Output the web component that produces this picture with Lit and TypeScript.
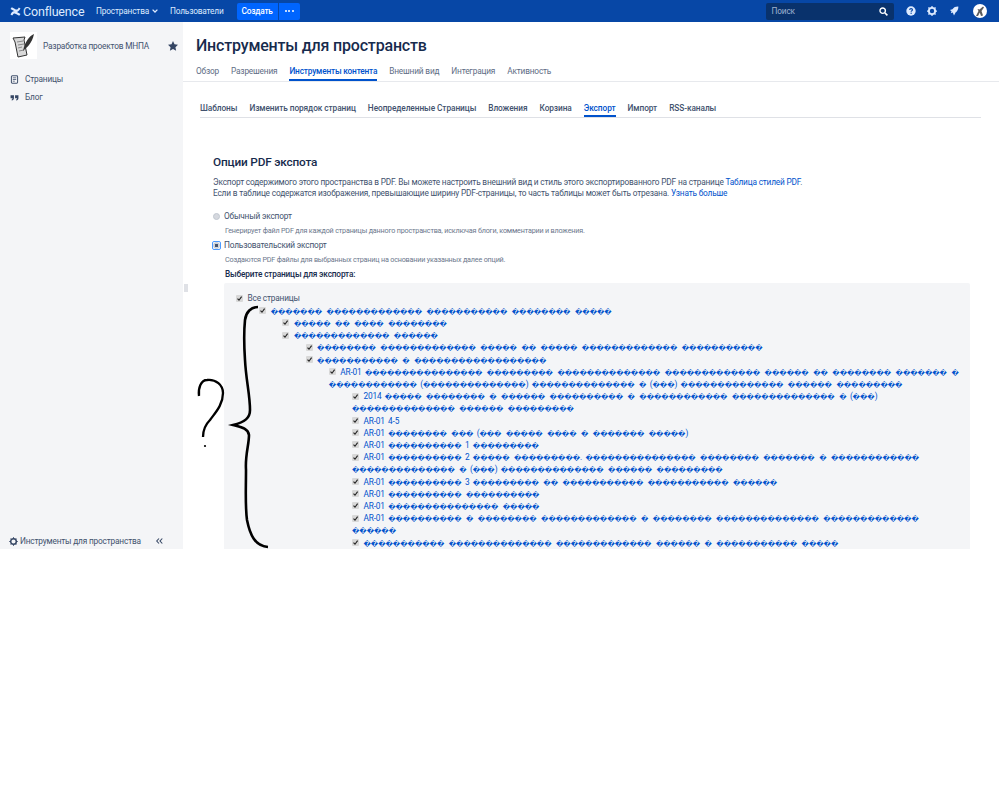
import { LitElement, html, css, svg } from "lit";
import { customElement } from "lit/decorators.js";

const C = "\uFFFD";
// Digits stand for runs of replacement characters; "#n" stays a literal digit.
const w = (s: string) => s.replace(/#(\d)|(\d+)/g, (_m, lit, n) => (lit ? "\u0001" + lit : C.repeat(+n))).replace(/\u0001/g, "");

interface Row { lvl: number; pre?: string; t: string; }
const rows: Row[] = [
  { lvl: 1, t: w("7 13 11 8 5") },
  { lvl: 2, t: w("5 2 4 8") },
  { lvl: 2, t: w("13 6") },
  { lvl: 3, t: w("8 13 5 2 5 13 11") },
  { lvl: 3, t: w("11 1 18") },
  { lvl: 4, pre: "AR-01 ", t: w("16 9 14 13 6 2 8 7 1 12 (14) 14 1 (3) 14 6 9") },
  { lvl: 5, pre: "2014 ", t: w("5 8 1 6 10 1 12 14 1 (3) 14 6 9") },
  { lvl: 5, pre: "AR-01 4-5", t: "" },
  { lvl: 5, pre: "AR-01 ", t: w("8 3 (3 5 4 1 7 5)") },
  { lvl: 5, pre: "AR-01 ", t: w("10 #1 9") },
  { lvl: 5, pre: "AR-01 ", t: w("10 #2 5 9. 15 8 7 1 12 14 1 (3) 14 6 9") },
  { lvl: 5, pre: "AR-01 ", t: w("10 #3 9 2 11 11 6") },
  { lvl: 5, pre: "AR-01 ", t: w("10 10") },
  { lvl: 5, pre: "AR-01 ", t: w("15 5") },
  { lvl: 5, pre: "AR-01 ", t: w("10 1 8 13 1 8 14 13 6") },
  { lvl: 5, t: w("11 14 13 6 1 11 5") },
];

const icon = (body: unknown, size = 10, vb = 16) => html`<svg width=${size} height=${size} viewBox="0 0 ${vb} ${vb}">${body}</svg>`;
const check = html`<span class="cb"><svg width="7" height="7" viewBox="0 0 7 7"><path d="M1.5 3.6 3 5.2 5.6 1.6" fill="none" stroke="#222" stroke-width="1.1"/></svg></span>`;

@customElement("app-root")
export class AppRoot extends LitElement {
  static styles = css`
    :host { display: block; width: 999px; height: 802px; background: #fff; font-family: Roboto, "Noto Sans", sans-serif; color: #172b4d; font-size: 8.3px; letter-spacing: -0.18px; position: relative; overflow: hidden; }
    svg { display: block; flex: none; }
    a { color: inherit; text-decoration: none; }
    .page { height: 549px; display: flex; flex-direction: column; overflow: hidden; }
    header { height: 22px; flex: none; background: #0747a6; color: #deebff; display: flex; align-items: center; padding-left: 10px; box-sizing: border-box; }
    .brand { display: flex; align-items: center; gap: 2px; color: #deebff; font-size: 12.5px; width: 86px; }
    .nav { display: flex; align-items: center; gap: 3px; }
    .nav + .nav { margin-left: 12px; }
    .btns { display: flex; gap: 1px; margin-left: 13px; height: 17px; }
    .btn { background: #0065ff; color: #fff; display: flex; align-items: center; justify-content: center; font-weight: 500; border-radius: 2px 0 0 2px; width: 41px; }
    .btn.more { width: 21px; border-radius: 0 2px 2px 0; gap: 1.5px; }
    .dot { width: 2px; height: 2px; border-radius: 50%; background: #fff; }
    .search { margin-left: auto; width: 128px; height: 17px; background: #09326c; border-radius: 2px; display: flex; align-items: center; justify-content: space-between; box-sizing: border-box; padding: 0 6px; color: #9fb3d1; }
    .tools { display: flex; align-items: center; gap: 11.5px; margin: 0 12px; }
    .avatar { width: 14px; height: 14px; border-radius: 50%; background: #fff; display: flex; align-items: center; justify-content: center; margin-left: 3px; }
    .body { flex: 1; display: flex; min-height: 0; }
    aside { width: 183px; flex: none; background: #f4f5f7; display: flex; flex-direction: column; color: #42526e; box-sizing: border-box; }
    .space { display: flex; align-items: center; padding: 8px 5px 0 10px; height: 31px; }
    .space-logo { width: 27px; height: 27px; background: #fff; flex: none; display: flex; align-items: center; justify-content: center; }
    .space-name { margin-left: 6px; flex: 1; }
    .side-links { margin-top: 12px; display: flex; flex-direction: column; gap: 6px; padding-left: 10px; }
    .side-link { display: flex; align-items: center; gap: 6px; height: 12px; }
    .side-foot { margin-top: auto; display: flex; align-items: center; padding: 0 20px 0 9px; height: 16px; }
    .side-foot span { margin-left: 2px; flex: 1; }
    main { flex: 1; min-width: 0; position: relative; }
    .splitter { position: absolute; left: 1px; top: 262px; width: 4px; height: 8px; background: #dfe1e6; }
    .head { padding: 14px 0 0 13px; border-bottom: 1px solid #e7e9ed; height: 60px; box-sizing: border-box; }
    h1 { margin: 0; font-size: 16px; line-height: 20px; font-weight: 500; color: #172b4d; }
    .tabs { display: flex; gap: 12px; margin-top: 10px; color: #5e6c84; }
    .tab { height: 15px; line-height: 11px; box-sizing: border-box; }
    .tab.on { color: #0052cc; font-weight: 500; border-bottom: 2px solid #0052cc; }
    .content { padding: 21px 18px 0 17px; }
    .sub { display: flex; gap: 12px; color: #42526e; border-bottom: 1px solid #dfe1e6; height: 14px; font-weight: 500; letter-spacing: -0.075px; }
    .sub div { height: 14px; box-sizing: border-box; line-height: 11px; }
    .sub .on { color: #0052cc; border-bottom: 2px solid #0052cc; }
    .form { padding: 36px 0 0 13px; margin-right: -7px; }
    h2 { margin: 0; font-size: 11.8px; line-height: 16px; font-weight: 500; }
    p { margin: 6.5px 0 0; line-height: 11px; color: #42526e; }
    p a { color: #0052cc; }
    .radio { display: flex; align-items: center; gap: 4px; height: 14px; color: #42526e; }
    .radio i { width: 7px; height: 7px; box-sizing: border-box; border-radius: 50%; background: #d5d8de; border: 0.5px solid #c1c7d0; flex: none; position: relative; }
    .radio.on i { background: radial-gradient(circle, #42526e 0 1.4px, #d5d8de 1.9px); }
    .radio.on i::after { content: ""; position: absolute; inset: -2px; border: 1px solid #4c9aff; border-radius: 2px; }
    .radios { margin-top: 10.5px; }
    .desc { margin: 1px 0 0 12px; height: 14px; line-height: 14px; font-size: 7.2px; color: #6b778c; }
    .pick { margin: 0 0 0 12px; font-weight: 500; line-height: 14px; height: 16px; }
    .tree { background: #f4f5f7; margin: 0 0 0 11px; width: 746px; height: 300px; box-sizing: border-box; padding: 9px 8px 0 12px; border-radius: 2px; line-height: 12.2px; color: #42526e; }
    .all { margin-bottom: 0.5px; }
    .cb { display: inline-block; width: 7px; height: 7px; background: #d8d8d8; border-radius: 1px; margin-right: 4.5px; vertical-align: -0.5px; position: relative; }
    .cb svg { position: absolute; left: 0; top: 0; }
    .link { color: #0052cc; word-spacing: 1.5px; }
    .q { font-family: "DejaVu Sans", sans-serif; font-size: 6.6px; font-weight: 700; line-height: 1; letter-spacing: 0; word-spacing: 2.2px; }
    .ink { position: absolute; left: 0; top: 0; pointer-events: none; }
  `;

  /** Replacement characters take the fallback face; digits and brackets stay in the text face. */
  renderTitle(t: string) {
    return t.split(new RegExp(`(${C}+(?: +${C}+)*)`)).map((part) => (part.includes(C) ? html`<span class="q">${part}</span>` : part));
  }

  renderRow(r: Row) {
    return html`<div style="margin-left:${r.lvl * 23.2}px">${check}<span class="link">${r.pre ?? ""}${this.renderTitle(r.t)}</span></div>`;
  }

  render() {
    return html`<div class="page">
      <header>
        <div class="brand">
          <svg width="11" height="9" viewBox="0 0 11 9"><path d="M0.5 7.5C2.5 4 4 3.5 6 4.6L10.5 7 9.2 8.8 6 7C4.4 6 3.5 6.3 2.2 8.6ZM10.5 1.5C8.5 5 7 5.5 5 4.4L0.5 2 1.8 0.2 5 2C6.6 3 7.5 2.7 8.8 0.4Z" fill="#deebff"/></svg>
          <span>Confluence</span>
        </div>
        <div class="nav">Пространства <svg width="6" height="4" viewBox="0 0 6 4"><path d="M.6.6 3 3 5.4.6" fill="none" stroke="#deebff" stroke-width="1.3"/></svg></div>
        <div class="nav">Пользователи</div>
        <div class="btns">
          <div class="btn">Создать</div>
          <div class="btn more"><b class="dot"></b><b class="dot"></b><b class="dot"></b></div>
        </div>
        <div class="search"><span>Поиск</span>
          <svg width="9" height="9" viewBox="0 0 9 9"><circle cx="3.7" cy="3.7" r="2.7" fill="none" stroke="#fff" stroke-width="1.4"/><path d="M5.8 5.8 8.4 8.4" stroke="#fff" stroke-width="1.6"/></svg>
        </div>
        <div class="tools">
          ${icon(svg`<circle cx="8" cy="8" r="7.5" fill="#deebff"/><path d="M5.7 6.2C5.9 4.8 6.9 4.2 8.1 4.2 9.5 4.2 10.4 5 10.4 6.1 10.4 7.6 8.2 7.7 8.2 9.3" fill="none" stroke="#0747a6" stroke-width="1.8"/><circle cx="8.2" cy="11.5" r="1.1" fill="#0747a6"/>`)}
          ${icon(svg`<circle cx="8" cy="8" r="5" fill="none" stroke="#deebff" stroke-width="3"/><path d="M8 0V3M8 13V16M0 8H3M13 8H16M2.3 2.3 4.4 4.4M11.6 11.6 13.7 13.7M13.7 2.3 11.6 4.4M4.4 11.6 2.3 13.7" stroke="#deebff" stroke-width="2"/>`)}
          ${icon(svg`<path d="M15 1 C11 .8 8 2 5.5 5 L1.5 6.5 4 8.5 3 11.5 6 10.5 8 15 10.5 10.5 C13.5 8 15 5 15 1Z" fill="#deebff"/>`)}
          <div class="avatar">
            <svg width="10" height="11" viewBox="0 0 10 11"><path d="M1 10 3.5 5 2.5 3 4.5 3.5 8 0.5 9 1.5 6.5 5 8 9.5 6 10 4.8 6.5 3 10Z" fill="#5b5b5b"/></svg>
          </div>
        </div>
      </header>
      <div class="body">
        <aside>
          <div class="space">
            <div class="space-logo">
              <svg width="27" height="27" viewBox="0 0 27 27"><path d="M3 6 15 5 14 8 17 23 8 25 5 10Z" fill="#d9d9d9" stroke="#333" stroke-width="1"/><path d="M7 10 13 9M8 13 14 12M8 16 12 15M9 19 14 18" stroke="#666" stroke-width="0.7"/><path d="M24 2C19 4 15 10 13 19 16 16 22 12 24 2Z" fill="#333"/></svg>
            </div>
            <div class="space-name">Разработка проектов МНПА</div>
            ${icon(svg`<path d="M8 0 10.4 5.2 16 5.9 11.9 9.8 13 15.5 8 12.7 3 15.5 4.1 9.8 0 5.9 5.6 5.2Z" fill="#344563"/>`, 10)}
          </div>
          <div class="side-links">
            <div class="side-link">
              ${icon(svg`<rect x="2.5" y="1.5" width="11" height="13" rx="1.5" fill="none" stroke="#42526e" stroke-width="1.8"/><path d="M5 5H11M5 8H11M5 11H8.5" stroke="#42526e" stroke-width="1.4"/>`, 9)}
              <span>Страницы</span>
            </div>
            <div class="side-link">
              ${icon(svg`<path d="M1 4H7V9C7 11.5 5.5 13 3 13.5V11.5C4 11 4.5 10.5 4.5 9.5H1ZM9 4H15V9C15 11.5 13.5 13 11 13.5V11.5C12 11 12.5 10.5 12.5 9.5H9Z" fill="#344563"/>`, 9)}
              <span>Блог</span>
            </div>
          </div>
          <div class="side-foot">
            ${icon(svg`<circle cx="8" cy="8" r="5" fill="none" stroke="#344563" stroke-width="2.6"/><path d="M8 .5V3M8 13V15.5M.5 8H3M13 8H15.5M2.7 2.7 4.4 4.4M11.6 11.6 13.3 13.3M13.3 2.7 11.6 4.4M4.4 11.6 2.7 13.3" stroke="#344563" stroke-width="1.8"/>`, 9)}
            <span>Инструменты для пространства</span>
            <svg width="7" height="6" viewBox="0 0 7 6"><path d="M3 .5.7 3 3 5.5M6.3.5 4 3 6.3 5.5" fill="none" stroke="#344563" stroke-width="1.1"/></svg>
          </div>
        </aside>
        <main>
          <div class="splitter"></div>
          <div class="head">
            <h1>Инструменты для пространств</h1>
            <div class="tabs">
              <div class="tab">Обзор</div><div class="tab">Разрешения</div><div class="tab on">Инструменты контента</div><div class="tab">Внешний вид</div><div class="tab">Интеграция</div><div class="tab">Активность</div>
            </div>
          </div>
          <div class="content">
            <div class="sub">
              <div>Шаблоны</div><div>Изменить порядок страниц</div><div>Неопределенные Страницы</div><div>Вложения</div><div>Корзина</div><div class="on">Экспорт</div><div>Импорт</div><div>RSS-каналы</div>
            </div>
            <div class="form">
              <h2>Опции PDF экспота</h2>
              <p>Экспорт содержимого этого пространства в PDF. Вы можете настроить внешний вид и стиль этого экспортированного PDF на странице <a>Таблица стилей PDF</a>.<br>Если в таблице содержатся изображения, превышающие ширину PDF-страницы, то часть таблицы может быть отрезана. <a>Узнать больше</a></p>
              <div class="radios">
                <div class="radio"><i></i>Обычный экспорт</div>
                <div class="desc">Генерирует файл PDF для каждой страницы данного пространства, исключая блоги, комментарии и вложения.</div>
                <div class="radio on"><i></i>Пользовательский экспорт</div>
                <div class="desc">Создаются PDF файлы для выбранных страниц на основании указанных далее опций.</div>
              </div>
              <div class="pick">Выберите страницы для экспорта:</div>
              <div class="tree">
                <div class="all">${check}Все страницы</div>
                ${rows.map((r) => this.renderRow(r))}
              </div>
            </div>
          </div>
        </main>
      </div>
    </div>
    <svg class="ink" width="999" height="549" viewBox="0 0 999 549">
      <path d="M258 307C251 307 246 312 245 320C244 330 244 345 245 360C246 380 250 395 250 410C250 418 245 422 233 425C240 427 248 428 249 435C249 445 245 455 246 470C246 490 245 505 247 520C250 535 255 546 268 547" fill="none" stroke="#000" stroke-width="2.6"/>
      <path d="M199 396C198 388 201 380 207 380C216 379 223 385 223 393C223 405 215 413 210 420C205 425 203 430 203 437" fill="none" stroke="#000" stroke-width="2.3"/>
      <circle cx="205" cy="446" r="1.1" fill="#000"/>
    </svg>`;
  }
}
